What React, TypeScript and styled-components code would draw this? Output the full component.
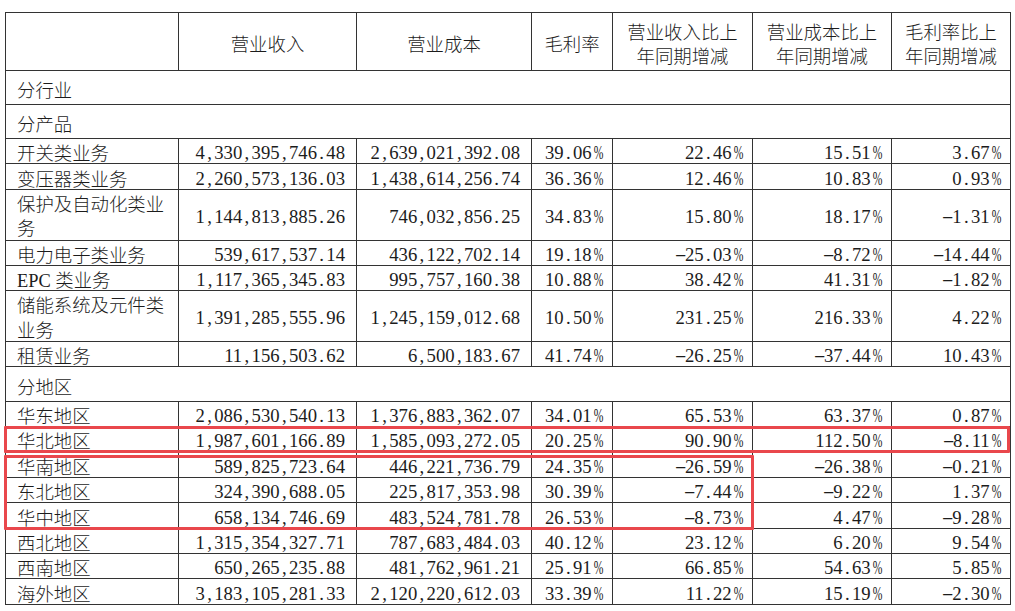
import React from "react";
import styled, { createGlobalStyle } from "styled-components";

const GlobalStyle = createGlobalStyle`
  html, body { margin: 0; padding: 0; background: #fff; }
  body { font-family: "Noto Sans CJK SC", sans-serif; }
`;

const Page = styled.div`
  padding: 12px 0 0 5px;
`;

const Frame = styled.div`
  position: relative;
  width: 1006px;
`;

const Table = styled.table`
  border-collapse: collapse;
  table-layout: fixed;
  width: 1006px;
  color: #1c1c1c;
  font-size: 18.4px;
`;

const Col = styled.col<{ $w: number }>`
  width: ${(p) => p.$w}px;
`;

const Th = styled.th`
  border: 1px solid #333;
  font-family: "Noto Sans CJK SC", sans-serif;
  font-weight: 300;
  text-align: center;
  vertical-align: middle;
  line-height: 23.4px;
  height: 58px;
  padding: 4px 2px 0;
  box-sizing: border-box;
`;

const Tr = styled.tr<{ $h: number }>`
  height: ${(p) => p.$h}px;
`;

const Cell = styled.td`
  border: 1px solid #333;
  vertical-align: middle;
  box-sizing: border-box;
  padding: 0 11px;
`;

const LabelCell = styled(Cell)<{ $double?: boolean }>`
  font-family: "Noto Sans CJK SC", sans-serif;
  font-weight: 300;
  text-align: left;
  line-height: ${(p) => (p.$double ? 24.6 : 22)}px;
  padding-top: ${(p) => (p.$double ? 0.5 : 2)}px;
`;

const NumCell = styled(Cell)`
  font-family: "Liberation Serif", serif;
  font-size: 18.7px;
  text-align: right;
  white-space: nowrap;
  line-height: 21px;
  padding-top: 3px;
`;

const GroupCell = styled(Cell)`
  font-family: "Noto Sans CJK SC", sans-serif;
  font-weight: 300;
  text-align: left;
  line-height: 24px;
  padding-top: 3px;
`;

const Latin = styled.span`
  font-family: "Liberation Serif", serif;
  line-height: 1;
`;

const Glyph = styled.span<{ $kind: "comma" | "dot" | "pct" | "minus" }>`
  display: inline-block;
  width: 0.5em;
  text-align: center;
  transform: ${(p) =>
    p.$kind === "pct"
      ? "scaleX(0.62)"
      : p.$kind === "minus"
      ? "scaleX(1.9) translateY(-1px)"
      : "none"};
  white-space: pre;
`;

const Highlight = styled.div<{ $l: number; $t: number; $w: number; $h: number }>`
  position: absolute;
  left: ${(p) => p.$l}px;
  top: ${(p) => p.$t}px;
  width: ${(p) => p.$w}px;
  height: ${(p) => p.$h}px;
  box-sizing: border-box;
  border: 3px solid #e9474c;
  border-radius: 1px;
  pointer-events: none;
`;

const kindOf = (c: string): "comma" | "dot" | "pct" | "minus" =>
  c === "," ? "comma" : c === "." ? "dot" : c === "%" ? "pct" : "minus";

const Num: React.FC<{ v: string }> = ({ v }) => {
  const parts: React.ReactNode[] = [];
  let run = "";
  [...v].forEach((c, i) => {
    if (/\d/.test(c)) {
      run += c;
    } else {
      if (run) parts.push(run);
      run = "";
      parts.push(
        <Glyph key={i} $kind={kindOf(c)}>
          {c}
        </Glyph>
      );
    }
  });
  if (run) parts.push(run);
  return <>{parts}</>;
};

const Label: React.FC<{ text: string }> = ({ text }) => {
  const m = text.match(/^([A-Za-z]+ )(.*)$/);
  if (!m) return <>{text}</>;
  return (
    <>
      <Latin>{m[1]}</Latin>
      {m[2]}
    </>
  );
};

type Row = { h: number; cells: [string, string, string, string, string, string, string] };

const products: Row[] = [
  { h: 25, cells: ["开关类业务", "4,330,395,746.48", "2,639,021,392.08", "39.06%", "22.46%", "15.51%", "3.67%"] },
  { h: 26, cells: ["变压器类业务", "2,260,573,136.03", "1,438,614,256.74", "36.36%", "12.46%", "10.83%", "0.93%"] },
  { h: 51, cells: ["保护及自动化类业务", "1,144,813,885.26", "746,032,856.25", "34.83%", "15.80%", "18.17%", "-1.31%"] },
  { h: 25, cells: ["电力电子类业务", "539,617,537.14", "436,122,702.14", "19.18%", "-25.03%", "-8.72%", "-14.44%"] },
  { h: 25, cells: ["EPC 类业务", "1,117,365,345.83", "995,757,160.38", "10.88%", "38.42%", "41.31%", "-1.82%"] },
  { h: 51, cells: ["储能系统及元件类业务", "1,391,285,555.96", "1,245,159,012.68", "10.50%", "231.25%", "216.33%", "4.22%"] },
  { h: 25, cells: ["租赁业务", "11,156,503.62", "6,500,183.67", "41.74%", "-26.25%", "-37.44%", "10.43%"] },
];

const regions: Row[] = [
  { h: 25, cells: ["华东地区", "2,086,530,540.13", "1,376,883,362.07", "34.01%", "65.53%", "63.37%", "0.87%"] },
  { h: 25, cells: ["华北地区", "1,987,601,166.89", "1,585,093,272.05", "20.25%", "90.90%", "112.50%", "-8.11%"] },
  { h: 26, cells: ["华南地区", "589,825,723.64", "446,221,736.79", "24.35%", "-26.59%", "-26.38%", "-0.21%"] },
  { h: 25, cells: ["东北地区", "324,390,688.05", "225,817,353.98", "30.39%", "-7.44%", "-9.22%", "1.37%"] },
  { h: 26, cells: ["华中地区", "658,134,746.69", "483,524,781.78", "26.53%", "-8.73%", "4.47%", "-9.28%"] },
  { h: 25, cells: ["西北地区", "1,315,354,327.71", "787,683,484.03", "40.12%", "23.12%", "6.20%", "9.54%"] },
  { h: 25, cells: ["西南地区", "650,265,235.88", "481,762,961.21", "25.91%", "66.85%", "54.63%", "5.85%"] },
  { h: 26, cells: ["海外地区", "3,183,105,281.33", "2,120,220,612.03", "33.39%", "11.22%", "15.19%", "-2.30%"] },
];

const widths = [173, 178, 175, 81, 140, 139, 119];

const DataRow: React.FC<{ row: Row }> = ({ row }) => (
  <Tr $h={row.h}>
    <LabelCell $double={row.cells[0].length > 8}>
      <Label text={row.cells[0]} />
    </LabelCell>
    {row.cells.slice(1).map((v, i) => (
      <NumCell key={i}>
        <Num v={v} />
      </NumCell>
    ))}
  </Tr>
);

const Group: React.FC<{ label: string; h: number }> = ({ label, h }) => (
  <Tr $h={h}>
    <GroupCell colSpan={7}>{label}</GroupCell>
  </Tr>
);

export default function App() {
  return (
    <Page>
      <GlobalStyle />
      <Frame>
        <Table>
          <colgroup>
            {widths.map((w, i) => (
              <Col key={i} $w={w} />
            ))}
          </colgroup>
          <thead>
            <tr>
              <Th></Th>
              <Th>营业收入</Th>
              <Th>营业成本</Th>
              <Th>毛利率</Th>
              <Th>
                营业收入比上
                <br />
                年同期增减
              </Th>
              <Th>
                营业成本比上
                <br />
                年同期增减
              </Th>
              <Th>
                毛利率比上
                <br />
                年同期增减
              </Th>
            </tr>
          </thead>
          <tbody>
            <Group label="分行业" h={34} />
            <Group label="分产品" h={34} />
            {products.map((r) => (
              <DataRow key={r.cells[0]} row={r} />
            ))}
            <Group label="分地区" h={35} />
            {regions.map((r) => (
              <DataRow key={r.cells[0]} row={r} />
            ))}
          </tbody>
        </Table>
        <Highlight $l={-1.5} $t={414} $w={1006} $h={27} />
        <Highlight $l={-1.5} $t={442.5} $w={750} $h={75} />
      </Frame>
    </Page>
  );
}
